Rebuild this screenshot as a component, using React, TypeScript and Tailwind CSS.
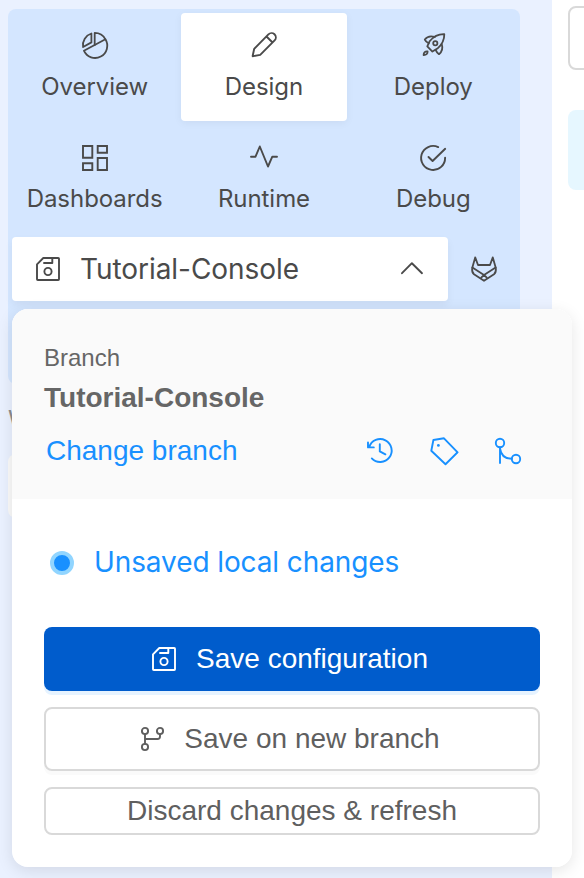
import type { ReactNode } from "react";

function Icon({ children, className = "" }: { children: ReactNode; className?: string }) {
  return (
    <svg
      viewBox="0 0 32 32"
      className={`size-8 shrink-0 ${className}`}
      fill="none"
      stroke="currentColor"
      strokeWidth="1.9"
      strokeLinecap="round"
      strokeLinejoin="round"
      aria-hidden="true"
    >
      {children}
    </svg>
  );
}

const PieIcon = () => (
  <Icon>
    <g strokeWidth="1.8">
      <path d="M12.4 4.5V13.4L4.1 18A12.1 12.1 0 0 1 12.4 4.5ZM15.7 16V3.9A12.1 12.1 0 0 1 26.4 10.3" />
      <path d="M26.4 10.3 4.9 21.7A12.2 12.2 0 1 0 26.4 10.3Z" />
    </g>
  </Icon>
);

const PencilIcon = () => (
  <Icon>
    <path d="M4.6 27.2 6.2 19.8 20.4 5.4A4.3 4.3 0 0 1 26.6 11.4L12.2 25.9ZM18.5 7.5 24.3 13.2" />
  </Icon>
);

const RocketIcon = () => (
  <Icon>
    <g strokeWidth="1.8">
      <path d="M27.3 5.2C21.5 5 16.5 7.6 12.6 12.3L10.3 17.4 15.4 22.6 20.4 19.6C25 15.6 27.4 11.5 27.3 5.2Z" />
      <circle cx="18.3" cy="14.3" r="2.1" />
      <path d="M17.8 7.9C13.5 6.6 9.8 7.8 7.8 10.6 8.6 12.4 10 13.4 11.7 14.3M24.7 15C26 19 25.4 22.4 22 25.2 20.6 24.2 19.3 22.6 18.6 20.9M10.6 22.4C8.2 22 6.6 23.6 6.6 26 9.2 26.1 10.8 24.8 10.6 22.4Z" />
    </g>
  </Icon>
);

const DashboardIcon = () => (
  <Icon>
    <g strokeLinejoin="miter">
      <path d="M4 4H13.3V15.7H4ZM4 21.3H13.3V28H4ZM18.7 4H28V10.7H18.7ZM18.7 16H28V28H18.7Z" />
    </g>
  </Icon>
);

const ActivityIcon = () => (
  <Icon>
    <path d="M3 14.7H7.5L11.8 4.5 20 24.5 24.3 14.7H29" />
  </Icon>
);

const CheckCircleIcon = () => (
  <Icon>
    <path d="M21.2 5.1A12 12 0 1 0 28.1 15.7M11.5 15 15.6 19 28.2 6.8" />
  </Icon>
);

const DiskIcon = () => (
  <Icon>
    <path d="M5 11.3 11.3 5H26.2Q27 5 27 5.8V26.2Q27 27 26.2 27H5.8Q5 27 5 26.2ZM20.3 5V10H12" />
    <circle cx="16" cy="18.5" r="3.6" />
  </Icon>
);

const ChevronUpIcon = () => (
  <Icon>
    <path d="M6 20.2 15.9 10.2 26 20.2" />
  </Icon>
);

const FoxIcon = () => (
  <Icon>
    <g strokeWidth="1.8">
      <path d="M7.2 4.4 4.2 15C3.8 18 4.2 19.8 6 21.2L16 27.8 26 21.2C27.8 19.8 28.2 18 27.8 15L24.8 4.4 22 12H10Z" />
      <path d="M4.4 14.6 16 22 18.8 24.6M27.6 14.6 16 22 13.2 24.6" />
    </g>
  </Icon>
);

const HistoryIcon = () => (
  <Icon>
    <path d="M7.8 23.4A11.5 11.5 0 1 0 5.2 12M4 7.5V12.4H9.8M15.8 9.3V16.4L21.4 19.3" />
  </Icon>
);

const TagIcon = () => (
  <Icon>
    <path d="M5.4 5 16 3.3 29.6 17.3 17.5 29.2 3.3 15.8Z" />
    <circle cx="10.4" cy="10.4" r="1.4" fill="currentColor" stroke="none" />
  </Icon>
);

const MergeIcon = () => (
  <Icon>
    <circle cx="8" cy="8" r="4.2" />
    <circle cx="24" cy="24" r="4.2" />
    <path d="M8 12.2V28M8 13.5C9 20 13 23.7 19.8 23.7" />
  </Icon>
);

const BranchIcon = () => (
  <Icon>
    <circle cx="9" cy="8" r="3.1" />
    <circle cx="24" cy="8" r="3.1" />
    <circle cx="9" cy="24" r="3.1" />
    <path d="M9 11.1V20.9M24 11.1V13.5Q24 16 21.5 16H9" />
  </Icon>
);

const tabs = [
  { label: "Overview", icon: <PieIcon /> },
  { label: "Design", icon: <PencilIcon />, active: true },
  { label: "Deploy", icon: <RocketIcon /> },
  { label: "Dashboards", icon: <DashboardIcon /> },
  { label: "Runtime", icon: <ActivityIcon /> },
  { label: "Debug", icon: <CheckCircleIcon /> },
];

function BranchPopover() {
  return (
    <div className="absolute top-[309px] left-3 h-[558px] w-[560px] overflow-hidden rounded-2xl bg-white font-['Liberation_Sans',sans-serif] text-[28px] text-[#5f5f5f]">
      <div className="h-[190px] bg-[#fafafa] px-8 pt-8 text-[#666]">
        <div className="text-2xl leading-[34px]">Branch</div>
        <div className="leading-[46px] font-bold">Tutorial-Console</div>
        <div className="mt-1.5 flex items-center pl-0.5 text-[#1890ff]">
          <a className="flex-1 leading-[48px]">Change branch</a>
          <div className="flex gap-8 pr-4">
            <HistoryIcon />
            <TagIcon />
            <MergeIcon />
          </div>
        </div>
      </div>
      <div className="flex flex-col px-8 pt-11">
        <div className="flex h-10 items-center pl-1.5 font-['Inter',sans-serif] tracking-[-0.1px] text-[#1890ff]">
          <span className="size-6 rounded-full border-4 border-[#91d5ff] bg-[#1890ff]" />
          <span className="mb-0.5 ml-5">Unsaved local changes</span>
        </div>
        <button className="mt-11 flex h-16 items-center justify-center gap-4 rounded-lg bg-[#005ccc] pr-2 text-white shadow-[0_4px_0_#e6f3ff]">
          <DiskIcon />
          Save configuration
        </button>
        <button className="mt-4 flex h-16 items-center justify-center gap-4 rounded-lg border-2 border-[#d9d9d9] pr-2 shadow-[0_4px_0_#fafafa]">
          <BranchIcon />
          Save on new branch
        </button>
        <button className="mt-4 flex h-12 items-center justify-center rounded-lg border-2 border-[#d9d9d9]">
          Discard changes &amp; refresh
        </button>
      </div>
    </div>
  );
}

export default function App() {
  return (
    <div className="relative flex h-[878px] w-[584px] overflow-hidden bg-white font-['Inter',sans-serif] text-[#4a4a4a]">
      <aside className="w-[552px] bg-[#eaf1ff] pt-[9px] pl-2">
        <div className="h-[375px] w-[512px] rounded-lg bg-[#d4e6ff] px-0.5 pt-1">
          <nav className="grid grid-cols-3 gap-y-1">
            {tabs.map((tab, i) => (
              <div
                key={tab.label}
                className={`mx-auto flex h-[108px] w-[166px] flex-col items-center rounded text-2xl ${i < 3 ? "gap-2.5 pt-4" : "gap-[9px] pt-[17px]"} ${tab.active ? "bg-white shadow-[0_2px_8px_#0000000d]" : ""}`}
              >
                {tab.icon}
                <span className="leading-8 tracking-[-0.05px]">{tab.label}</span>
              </div>
            ))}
          </nav>
          <div className="mt-1 flex items-center px-0.5">
            <div className="flex h-16 w-[436px] items-center rounded bg-white pr-5 pl-5 text-[28px] shadow-[0_4px_8px_#0000000d]">
              <DiskIcon />
              <span className="ml-4 flex-1 tracking-[-0.05px]">Tutorial-Console</span>
              <ChevronUpIcon />
            </div>
            <div className="ml-5">
              <FoxIcon />
            </div>
          </div>
        </div>
        <div className="mt-[18px] text-2xl leading-9 text-[#8c8c8c]">W</div>
        <div className="mt-4 h-16 w-[512px] rounded-lg bg-[#fafafa]" />
      </aside>
      <main className="w-8 overflow-hidden bg-white pt-1.5 pl-4">
        <div className="h-16 w-24 rounded-lg border-2 border-[#d9d9d9]" />
        <div className="mt-10 h-20 w-24 rounded-lg bg-[#e6f7ff]" />
      </main>
      <div className="absolute top-[309px] left-3 h-[558px] w-[560px] rounded-2xl shadow-[0_4px_16px_#0000001a]" />
      <BranchPopover />
    </div>
  );
}
